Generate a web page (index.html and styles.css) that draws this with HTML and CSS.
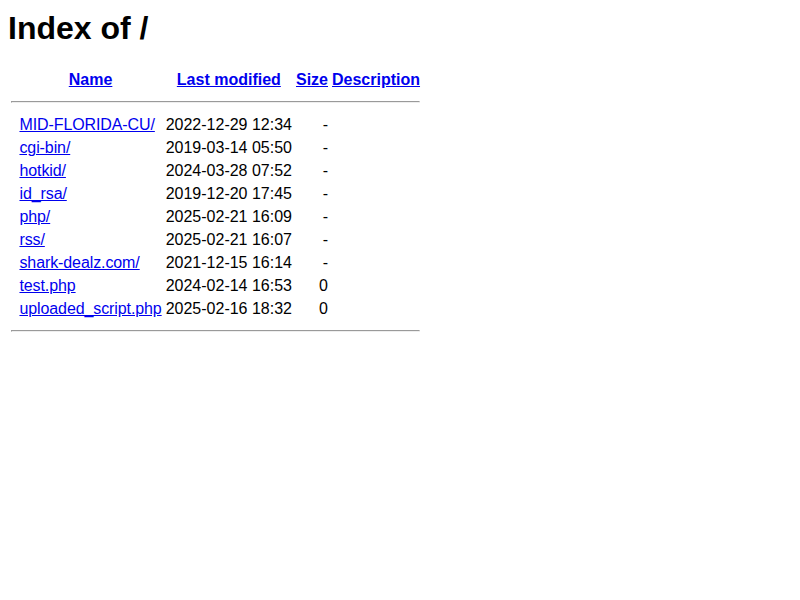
FILE: index.html
```html
<!DOCTYPE html>
<html>
<head>
    <meta charset="UTF-8">
    <title>Index of /</title>
    <link rel="stylesheet" href="styles.css">
</head>
<body>
    <h1 class="title">Index of /</h1>
    <table class="listing">
        <tr><th>&nbsp;</th><th><a href="?C=N;O=D">Name</a></th><th><a href="?C=M;O=A">Last modified</a></th><th><a href="?C=S;O=A">Size</a></th><th><a href="?C=D;O=A">Description</a></th></tr>
        <tr><th colspan="5"><hr class="rule"></th></tr>
        <tr><td>&nbsp;</td><td><a href="MID-FLORIDA-CU/">MID-FLORIDA-CU/</a></td><td class="num">2022-12-29 12:34  </td><td class="num">  - </td><td>&nbsp;</td></tr>
        <tr><td>&nbsp;</td><td><a href="cgi-bin/">cgi-bin/</a></td><td class="num">2019-03-14 05:50  </td><td class="num">  - </td><td>&nbsp;</td></tr>
        <tr><td>&nbsp;</td><td><a href="hotkid/">hotkid/</a></td><td class="num">2024-03-28 07:52  </td><td class="num">  - </td><td>&nbsp;</td></tr>
        <tr><td>&nbsp;</td><td><a href="id_rsa/">id_rsa/</a></td><td class="num">2019-12-20 17:45  </td><td class="num">  - </td><td>&nbsp;</td></tr>
        <tr><td>&nbsp;</td><td><a href="php/">php/</a></td><td class="num">2025-02-21 16:09  </td><td class="num">  - </td><td>&nbsp;</td></tr>
        <tr><td>&nbsp;</td><td><a href="rss/">rss/</a></td><td class="num">2025-02-21 16:07  </td><td class="num">  - </td><td>&nbsp;</td></tr>
        <tr><td>&nbsp;</td><td><a href="shark-dealz.com/">shark-dealz.com/</a></td><td class="num">2021-12-15 16:14  </td><td class="num">  - </td><td>&nbsp;</td></tr>
        <tr><td>&nbsp;</td><td><a href="test.php">test.php</a></td><td class="num">2024-02-14 16:53  </td><td class="num">  0 </td><td>&nbsp;</td></tr>
        <tr><td>&nbsp;</td><td><a href="uploaded_script.php">uploaded_script.php</a></td><td class="num">2025-02-16 18:32  </td><td class="num">  0 </td><td>&nbsp;</td></tr>
        <tr><th colspan="5"><hr class="rule"></th></tr>
    </table>
</body>
</html>
```

FILE: styles.css
```css
body {
    font-family: "Liberation Sans", Arial, sans-serif;
    color: #000;
    background-color: #fff;
    margin: 10px 8px 8px;
}
.title {
    font-size: 2em;
    margin-top: 0;
}
.listing td {
    line-height: 19px;
}
.listing td a {
    letter-spacing: -0.1px;
}
.listing td.num {
    text-align: right;
}
```
